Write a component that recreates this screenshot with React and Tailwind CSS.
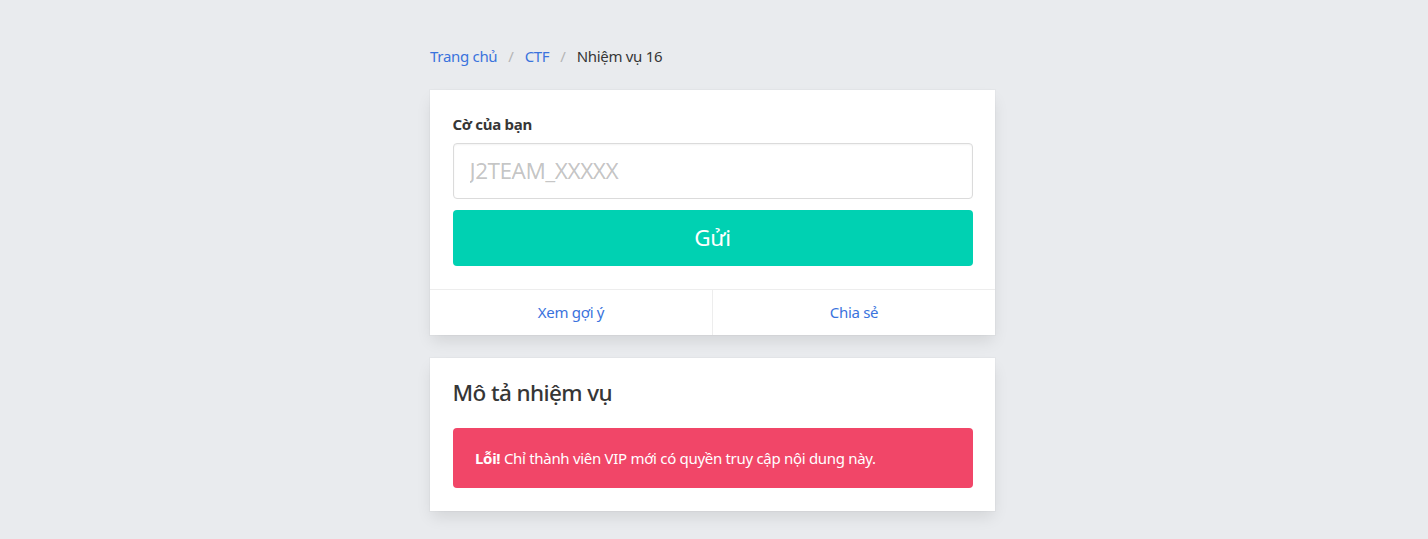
export default function App() {
  const font = { fontFamily: '"Noto Sans", "Open Sans", sans-serif' };
  return (
    <div className="min-h-[539px] bg-[#e9ebee] pt-[45px] text-[15px] tracking-[-0.3px] text-[#4a4a4a]" style={font}>
      <div className="mx-auto w-[568px] pr-[3px]">
        <nav className="mb-[22.5px] flex items-center text-[15px] leading-[22.5px]">
          <a className="pr-[11px] text-[#3a73dd]">Trang chủ</a>
          <span className="text-[#b5b5b5]">/</span>
          <a className="px-[11px] text-[#3a73dd]">CTF</a>
          <span className="text-[#b5b5b5]">/</span>
          <span className="pl-[11px] text-[#363636]">Nhiệm vụ 16</span>
        </nav>

        <div className="bg-white shadow-[0_7.5px_15px_-2px_rgba(10,10,10,0.1),0_0_0_1px_rgba(10,10,10,0.02)]">
          <div className="p-[22.5px]">
            <label className="mb-[7.5px] block font-bold leading-[22.5px] text-[#363636]">Cờ của bạn</label>
            <input
              placeholder="J2TEAM_XXXXX"
              className="mb-[11.25px] block h-[56.25px] w-full rounded-[4px] border border-[#dbdbdb] px-[16px] text-[22.5px] tracking-[-0.5px] text-[#363636] shadow-[inset_0_1px_2px_rgba(10,10,10,0.05)] outline-none placeholder:text-[rgba(54,54,54,0.3)]"
            />
            <button className="flex h-[56.25px] w-full items-center justify-center rounded-[4px] bg-[#00d1b2] text-[22.5px] text-white">
              Gửi
            </button>
          </div>
          <div className="flex border-t border-[#ededed]">
            <a className="flex flex-1 items-center justify-center border-r border-[#ededed] py-[11.25px] leading-[22.5px] text-[#3a73dd]">Xem gợi ý</a>
            <a className="flex flex-1 items-center justify-center py-[11.25px] leading-[22.5px] text-[#3a73dd]">Chia sẻ</a>
          </div>
        </div>

        <div className="mt-[23px] bg-white p-[22.5px] shadow-[0_7.5px_15px_-2px_rgba(10,10,10,0.1),0_0_0_1px_rgba(10,10,10,0.02)]">
          <h4 className="mb-[22.5px] text-[22.5px] font-medium leading-[1.125] tracking-[-0.6px] text-[#363636]">Mô tả nhiệm vụ</h4>
          <div className="rounded-[4px] bg-[#f14668] py-[18.75px] pl-[22.5px] pr-[37.5px] leading-[22.5px] text-white">
            <strong className="font-bold">Lỗi!</strong> Chỉ thành viên VIP mới có quyền truy cập nội dung này.
          </div>
        </div>
      </div>
    </div>
  );
}
